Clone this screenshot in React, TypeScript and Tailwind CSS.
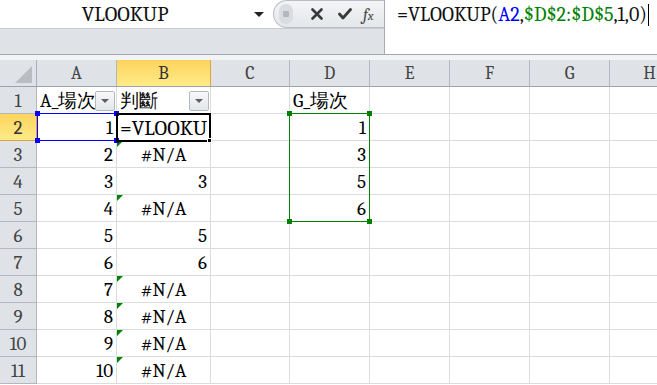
import React from 'react';

const serif = 'font-serif [font-family:Liberation_Serif,Noto_Sans_CJK_TC,serif]';

const COLS = [
  { name: 'A', w: 'w-[80px]' },
  { name: 'B', w: 'w-[94px]' },
  { name: 'C', w: 'w-[79px]' },
  { name: 'D', w: 'w-[80px]' },
  { name: 'E', w: 'w-[80px]' },
  { name: 'F', w: 'w-[80px]' },
  { name: 'G', w: 'w-[80px]' },
  { name: 'H', w: 'w-[80px]' },
];

type Cell = { text?: string; align?: 'left' | 'right' | 'center'; tri?: boolean; filter?: boolean; big?: boolean };

const ROWS: Cell[][] = [
  [{ text: 'A_場次', align: 'left', filter: true }, { text: '判斷', align: 'left', filter: true }, {}, { text: 'G_場次', align: 'left' }],
  [{ text: '1', align: 'right' }, { text: '=VLOOKU', align: 'left', big: true }, {}, { text: '1', align: 'right' }],
  [{ text: '2', align: 'right' }, { text: '#N/A', align: 'center', tri: true }, {}, { text: '3', align: 'right' }],
  [{ text: '3', align: 'right' }, { text: '3', align: 'right' }, {}, { text: '5', align: 'right' }],
  [{ text: '4', align: 'right' }, { text: '#N/A', align: 'center', tri: true }, {}, { text: '6', align: 'right' }],
  [{ text: '5', align: 'right' }, { text: '5', align: 'right' }],
  [{ text: '6', align: 'right' }, { text: '6', align: 'right' }],
  [{ text: '7', align: 'right' }, { text: '#N/A', align: 'center', tri: true }],
  [{ text: '8', align: 'right' }, { text: '#N/A', align: 'center', tri: true }],
  [{ text: '9', align: 'right' }, { text: '#N/A', align: 'center', tri: true }],
  [{ text: '10', align: 'right' }, { text: '#N/A', align: 'center', tri: true }],
];

function FilterButton() {
  return (
    <div className="absolute right-[1px] top-[4px] flex h-[20px] w-[20px] items-center justify-center rounded-[2px] border border-[#b4b8bd] bg-gradient-to-b from-[#f7f8f9] to-[#e3e6ea]">
      <div className="h-0 w-0 border-x-[4px] border-t-[4px] border-x-transparent border-t-[#5b5f64]" />
    </div>
  );
}

function FormulaBar() {
  return (
    <div className="flex h-[55px] border-b border-[#a3a7ad]">
      <div className="flex w-[384px] shrink-0 flex-col">
        <div className="flex h-[28px]">
          <div className="flex w-[273px] shrink-0 items-center bg-white">
            <div className={`w-[250px] text-center text-[21px] leading-none text-[#111] ${serif}`}>VLOOKUP</div>
            <div className="ml-[4px] h-0 w-0 border-x-[5px] border-t-[5px] border-x-transparent border-t-[#222]" />
          </div>
          <div className="flex flex-1 items-center rounded-l-full border border-r-0 border-[#b9bdc3] bg-gradient-to-b from-[#f3f4f6] to-[#e4e7eb]">
            <div className="ml-[5px] flex h-[20px] w-[14px] items-center justify-center rounded-full bg-[#d9dce0]">
              <div className="h-[6px] w-[6px] rounded-[1px] bg-[#b4b8bd]" />
            </div>
            <svg className="ml-[18px]" width="12" height="12" viewBox="0 0 12 12">
              <path d="M1.5 1.5 L10.5 10.5 M10.5 1.5 L1.5 10.5" stroke="#3a3a3a" strokeWidth="2.6" strokeLinecap="round" />
            </svg>
            <svg className="ml-[15px]" width="14" height="12" viewBox="0 0 14 12">
              <path d="M1.5 6 L5 10 L12.5 1.5" fill="none" stroke="#3a3a3a" strokeWidth="2.8" strokeLinecap="round" strokeLinejoin="round" />
            </svg>
            <span className={`ml-[11px] text-[17px] italic leading-none text-[#444] ${serif}`}>
              f<span className="text-[13px]">x</span>
            </span>
          </div>
        </div>
        <div className="flex-1 border-t border-[#c9ccd1] bg-[#dfe2e7]" />
      </div>
      <div className={`flex flex-1 items-start border-l border-[#a9adb3] bg-white pl-[12px] pt-[4px] text-[20px] leading-[21px] text-[#111] ${serif}`}>
        <span>=VLOOKUP(</span>
        <span className="text-[#0000ff]">A2</span>
        <span>,</span>
        <span className="text-[#008000]">$D$2:$D$5</span>
        <span>,1,0)</span>
        <span className="ml-[1px] h-[22px] w-[1px] bg-black" />
      </div>
    </div>
  );
}

function HeaderRow() {
  return (
    <div className="flex h-[27px] border-b border-[#9ea3a9] bg-[#dfe3e8]">
      <div className="relative w-[37px] shrink-0 border-r border-[#a9aeb4]">
        <div className="absolute bottom-[3px] right-[4px] h-0 w-0 border-b-[17px] border-l-[17px] border-b-[#b9bdc2] border-l-transparent" />
      </div>
      {COLS.map((c) => (
        <div
          key={c.name}
          className={`${c.w} flex shrink-0 items-center justify-center border-r pt-[2px] text-[18px] leading-none ${serif} ${
            c.name === 'B'
              ? 'border-[#e1a43c] bg-gradient-to-b from-[#fdd35b] to-[#feeb88] text-[#333]'
              : 'border-[#b3b8be] text-[#444]'
          }`}
        >
          {c.name}
        </div>
      ))}
    </div>
  );
}

function Row({ idx, cells }: { idx: number; cells: Cell[] }) {
  const active = idx === 2;
  return (
    <div className="flex h-[27px]">
      <div
        className={`flex w-[37px] shrink-0 items-center justify-center border-b border-r pt-[2px] text-[19px] leading-none ${serif} ${
          active
            ? 'border-[#e1a43c] bg-gradient-to-b from-[#fdd35b] to-[#feeb88] text-[#333]'
            : 'border-[#b3b8be] bg-[#dfe3e8] text-[#444]'
        }`}
      >
        {idx}
      </div>
      {COLS.map((c, i) => {
        const cell = cells[i] || {};
        return (
          <div
            key={c.name}
            className={`${c.w} relative flex shrink-0 items-center overflow-hidden border-b border-r border-[#dadcdd] px-[3px] leading-none text-black ${serif} ${
              cell.big ? 'text-[21px]' : 'text-[19px]'
            } ${cell.align === 'right' ? 'justify-end' : cell.align === 'center' ? 'justify-center' : 'justify-start'}`}
          >
            <span className="whitespace-nowrap pt-[2px]">{cell.text}</span>
            {cell.tri && (
              <div className="absolute left-0 top-0 h-0 w-0 border-r-[6px] border-t-[6px] border-r-transparent border-t-[#008000]" />
            )}
            {cell.filter && <FilterButton />}
          </div>
        );
      })}
    </div>
  );
}

function Handle({ className }: { className: string }) {
  return <div className={`absolute h-[5px] w-[5px] ${className}`} />;
}

export default function App() {
  return (
    <div className="relative h-[385px] w-[657px] overflow-hidden bg-white">
      <FormulaBar />
      <div className="h-[5px] bg-[#f2f3f5]" />
      <div className="relative">
        <HeaderRow />
        {ROWS.map((cells, i) => (
          <Row key={i} idx={i + 1} cells={cells} />
        ))}

        {/* A2 reference highlight */}
        <div className="absolute left-[37px] top-[53px] h-[28px] w-[80px] border-[1.5px] border-[#0000ff]">
          <Handle className="-left-[3px] -top-[3px] bg-[#0000ff]" />
          <Handle className="-right-[3px] -top-[3px] bg-[#0000ff]" />
          <Handle className="-bottom-[3px] -left-[3px] bg-[#0000ff]" />
          <Handle className="-bottom-[3px] -right-[3px] bg-[#0000ff]" />
        </div>

        {/* B2 active cell */}
        <div className="absolute left-[116px] top-[53px] h-[29px] w-[95px] border-2 border-black">
          <Handle className="-bottom-[3px] -right-[3px] border border-white bg-black" />
        </div>

        {/* D2:D5 range highlight */}
        <div className="absolute left-[289px] top-[53px] h-[109px] w-[81px] border-[1.5px] border-[#008000]">
          <Handle className="-left-[3px] -top-[3px] bg-[#008000]" />
          <Handle className="-right-[3px] -top-[3px] bg-[#008000]" />
          <Handle className="-bottom-[3px] -left-[3px] bg-[#008000]" />
          <Handle className="-bottom-[3px] -right-[3px] bg-[#008000]" />
        </div>
      </div>
    </div>
  );
}
